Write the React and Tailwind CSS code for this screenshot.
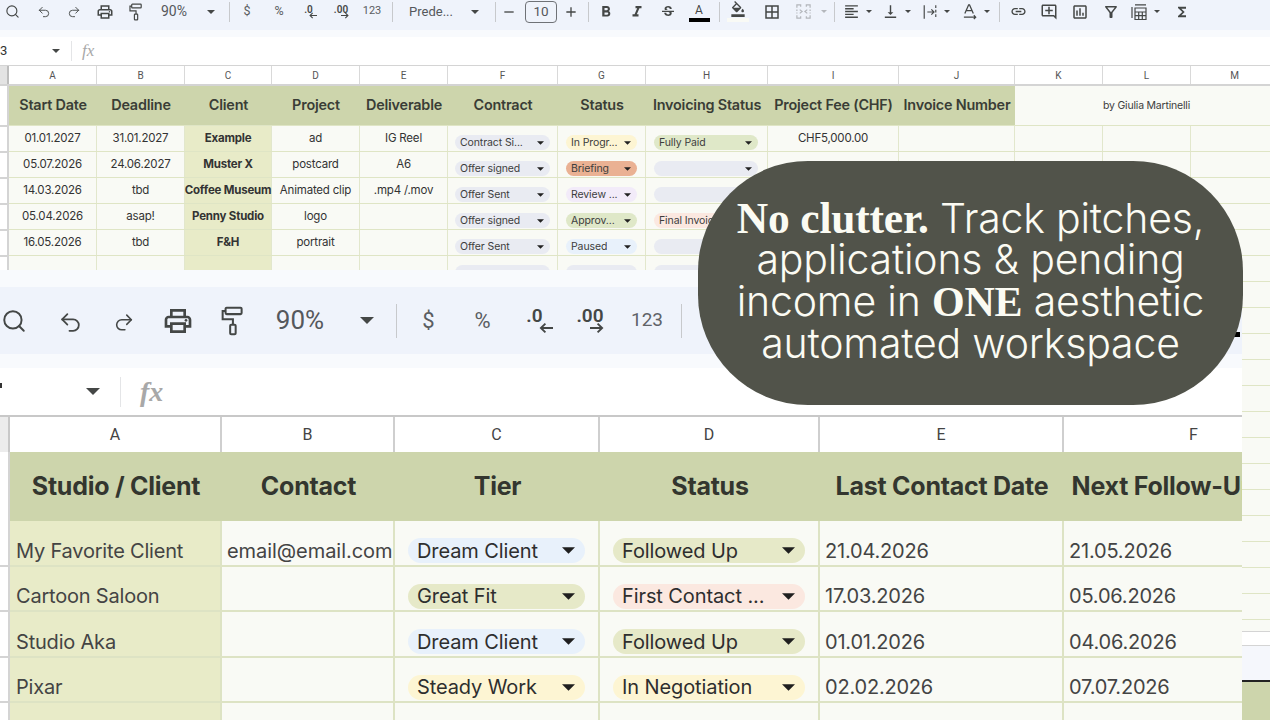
import React from "react";
import { Undo2, Redo2, Search } from "lucide-react";
import {
  MdOutlineLocalPrintshop, MdRemove, MdAdd, MdFormatBold, MdFormatItalic,
  MdStrikethroughS, MdFormatColorFill, MdBorderAll, MdFormatAlignLeft, MdVerticalAlignBottom, MdLink,
  MdOutlineAddComment, MdOutlineInsertChart, MdOutlineFilterAlt, MdFunctions,
} from "react-icons/md";

const Caret = ({ cls = "w-[8px] h-[4px]", color = "fill-[#444746]" }) => (
  <svg viewBox="0 0 8 4" className={`shrink-0 ${cls}`}><path d="M0 0h8L4 4z" className={color} /></svg>
);
const Sep = ({ cls = "h-[20px]" }) => <div className={`w-px bg-[#c7c9cc] shrink-0 ${cls}`} />;
const Slot = ({ w, children }) => <div className={`${w} shrink-0 flex items-center justify-center text-[#444746]`}>{children}</div>;

const DecArrow = ({ dir, cls }) => (
  <svg viewBox="0 0 12 10" className={cls}>
    {dir === "left"
      ? <path d="M12 5H2M5.5 1.2 1.6 5l3.9 3.8" fill="none" stroke="#444746" strokeWidth="1.6" />
      : <path d="M0 5h10M6.5 1.2 10.4 5 6.5 8.8" fill="none" stroke="#444746" strokeWidth="1.6" />}
  </svg>
);
const Roller = ({ cls }) => (
  <svg viewBox="0 0 24 32" className={cls}>
    <rect x="5" y="1.5" width="17.5" height="7" rx="1.2" fill="none" stroke="#444746" strokeWidth="2.2" />
    <path d="M5 5H1.8v9H13v6" fill="none" stroke="#444746" strokeWidth="2.2" />
    <rect x="10" y="20" width="6" height="10.5" rx="1.2" fill="none" stroke="#444746" strokeWidth="2.2" />
  </svg>
);
const MergeIcon = () => (
  <svg viewBox="0 0 18 18" className="w-[17px] h-[17px]">
    <path d="M2 5V2h4v2M16 5V2h-4v2M2 13v3h4v-2M16 13v3h-4v-2M2 7v1.5M2 10v1M16 7v1.5M16 10v1M5 7l2.5 2L5 11M13 7l-2.5 2 2.5 2" fill="none" stroke="#b4b7bc" strokeWidth="1.3" />
  </svg>
);
const Overflow = () => (
  <svg viewBox="0 0 18 18" className="w-[16px] h-[16px]">
    <path d="M2.5 1.5v15M6 9h7.5M10.5 6l3 3-3 3" fill="none" stroke="#444746" strokeWidth="1.3" />
    <path d="M15.5 1.5v15" fill="none" stroke="#444746" strokeWidth="1.3" strokeDasharray="3 2" />
  </svg>
);
const RotateA = () => (
  <svg viewBox="0 0 18 18" className="w-[17px] h-[17px]"><path d="M3 11 7 2h1l4 9M4.5 8h6M2 15h12M12.5 13l2 2-2 2" fill="none" stroke="#444746" strokeWidth="1.3" /></svg>
);
const CalcTable = () => (
  <svg viewBox="0 0 18 18" className="w-[18px] h-[18px]"><path d="M2 15V4M5 1.8h11M5 5h11v11.5H5zM5 9h11M5 12.7h11M8.7 9v7.5M12.3 9v7.5" fill="none" stroke="#444746" strokeWidth="1.2" /></svg>
);

const roboto = "font-['Roboto','Liberation_Sans',sans-serif]";

function TopToolbar() {
  const ic = "w-[16px] h-[16px]";
  return (
    <div className={`h-[30px] bg-[#eff3fb] flex items-center pb-[7px] ${roboto} text-[13px] text-[#444746] overflow-hidden`}>
      <Slot w="w-[24px]"><Search className="w-[15px] h-[15px]" strokeWidth={1.8} /></Slot>
      <Slot w="w-[30px] ml-[5px]"><Undo2 className="w-[14px] h-[14px]" strokeWidth={1.6} /></Slot>
      <Slot w="w-[30px]"><Redo2 className="w-[14px] h-[14px]" strokeWidth={1.6} /></Slot>
      <Slot w="w-[30px] ml-[1px]"><MdOutlineLocalPrintshop className="w-[18px] h-[18px]" /></Slot>
      <Slot w="w-[30px]"><Roller cls="w-[13px] h-[18px]" /></Slot>
      <Slot w="w-[40px] ml-[4px]"><span className="text-[14px] text-[#55585c]">90%</span></Slot>
      <Slot w="w-[14px] ml-[10px]"><Caret /></Slot>
      <Sep cls="h-[20px] ml-[11px]" />
      <Slot w="w-[20px] ml-[7px]"><span className="text-[12.5px] text-[#5a5d61]">$</span></Slot>
      <Slot w="w-[20px] ml-[12px]"><span className="text-[12.5px] text-[#5a5d61]">%</span></Slot>
      <Slot w="w-[24px] ml-[9px]"><span className="relative text-[10px] font-semibold -mt-[5px] -ml-[3px]">.0<DecArrow dir="left" cls="absolute w-[8px] h-[7px] left-[5px] top-[10px]" /></span></Slot>
      <Slot w="w-[24px] ml-[7px]"><span className="relative text-[10px] font-semibold -mt-[5px]">.00<DecArrow dir="right" cls="absolute w-[8px] h-[7px] left-[7px] top-[10px]" /></span></Slot>
      <Slot w="w-[24px] ml-[7px]"><span className="text-[11px] text-[#5a5d61]">123</span></Slot>
      <Sep cls="h-[20px] ml-[8px]" />
      <Slot w="w-[48px] ml-[14px]"><span className="text-[13px] text-[#55585c]">Prede...</span></Slot>
      <Slot w="w-[14px] ml-[13px]"><Caret /></Slot>
      <Sep cls="h-[20px] ml-[13px]" />
      <Slot w="w-[20px] ml-[3px]"><MdRemove className={ic} /></Slot>
      <div className="w-[32px] h-[22px] ml-[6px] shrink-0 border border-[#6f7277] rounded-[4px] flex items-center justify-center text-[13.5px] text-[#55585c]">10</div>
      <Slot w="w-[20px] ml-[4px]"><MdAdd className={ic} /></Slot>
      <Sep cls="h-[20px] ml-[7px]" />
      <Slot w="w-[24px] ml-[5px]"><MdFormatBold className="w-[18px] h-[18px]" /></Slot>
      <Slot w="w-[24px] ml-[7px]"><MdFormatItalic className="w-[18px] h-[18px]" /></Slot>
      <Slot w="w-[24px] ml-[7px]"><MdStrikethroughS className={ic} /></Slot>
      <Slot w="w-[24px] ml-[7px]">
        <div className="flex flex-col items-center -mb-[3px]">
          <span className="text-[12px] leading-[13px]">A</span>
          <div className="w-[21px] h-[4px] bg-black mt-[1px]" />
        </div>
      </Slot>
      <Sep cls="h-[20px] ml-[8px]" />
      <Slot w="w-[24px] ml-[6px]">
        <div className="flex flex-col items-center -mb-[4px]">
          <MdFormatColorFill className="w-[16px] h-[16px] -mt-[4px]" />
          <div className="w-[22px] h-[4px] bg-[#f9faf5] mt-[1px]" />
        </div>
      </Slot>
      <Slot w="w-[24px] ml-[10px]"><MdBorderAll className="w-[18px] h-[18px]" /></Slot>
      <Slot w="w-[24px] ml-[7px]"><MergeIcon /></Slot>
      <Slot w="w-[10px] ml-[4px]"><Caret cls="w-[6px] h-[3px]" color="fill-[#b4b7bc]" /></Slot>
      <Sep cls="h-[20px] ml-[5px]" />
      <Slot w="w-[20px] ml-[6px]"><MdFormatAlignLeft className="w-[17px] h-[17px]" /></Slot>
      <Slot w="w-[10px] ml-[3px]"><Caret cls="w-[6px] h-[3px]" /></Slot>
      <Slot w="w-[20px] ml-[6px]"><MdVerticalAlignBottom className="w-[17px] h-[17px]" /></Slot>
      <Slot w="w-[10px] ml-[3px]"><Caret cls="w-[6px] h-[3px]" /></Slot>
      <Slot w="w-[20px] ml-[7px]"><Overflow /></Slot>
      <Slot w="w-[10px] ml-[2px]"><Caret cls="w-[6px] h-[3px]" /></Slot>
      <Slot w="w-[20px] ml-[8px]"><RotateA /></Slot>
      <Slot w="w-[10px] ml-[2px]"><Caret cls="w-[6px] h-[3px]" /></Slot>
      <Sep cls="h-[20px] ml-[7px]" />
      <Slot w="w-[24px] ml-[6px]"><MdLink className="w-[17px] h-[17px]" /></Slot>
      <Slot w="w-[24px] ml-[7px]"><MdOutlineAddComment className="w-[18px] h-[18px]" /></Slot>
      <Slot w="w-[24px] ml-[7px]"><MdOutlineInsertChart className="w-[18px] h-[18px]" /></Slot>
      <Slot w="w-[24px] ml-[7px]"><MdOutlineFilterAlt className="w-[18px] h-[18px]" /></Slot>
      <Slot w="w-[24px] ml-[4px]"><CalcTable /></Slot>
      <Slot w="w-[10px] ml-[1px]"><Caret cls="w-[6px] h-[3px]" /></Slot>
      <Slot w="w-[20px] ml-[10px]"><MdFunctions className="w-[16px] h-[16px]" /></Slot>
    </div>
  );
}

const topLetters = [
  ["A", "w-[88px]"], ["B", "w-[88px]"], ["C", "w-[87px]"], ["D", "w-[88px]"], ["E", "w-[88px]"], ["F", "w-[110px]"],
  ["G", "w-[88px]"], ["H", "w-[122px]"], ["I", "w-[131px]"], ["J", "w-[116px]"], ["K", "w-[88px]"], ["L", "w-[88px]"], ["M", "w-[88px]"],
];
const dm = "font-['Inter','Liberation_Sans',sans-serif]";

const topHeaders = ["Start Date", "Deadline", "Client", "Project", "Deliverable", "Contract", "Status", "Invoicing Status", "Project Fee (CHF)", "Invoice Number"];

const topRows = [
  ["01.01.2027", "31.01.2027", "Example", "ad", "IG Reel", ["Contract Si...", "bg-[#e9ebf2]"], ["In Progr...", "bg-[#fdf5d3]"], ["Fully Paid", "bg-[#dfe8c8]"], "CHF5,000.00"],
  ["05.07.2026", "24.06.2027", "Muster X", "postcard", "A6", ["Offer signed", "bg-[#e9ebf2]"], ["Briefing", "bg-[#eab193]"], ["", "bg-[#e9ebf2]"], ""],
  ["14.03.2026", "tbd", "Coffee Museum", "Animated clip", ".mp4 /.mov", ["Offer Sent", "bg-[#e9ebf2]"], ["Review ...", "bg-[#f2ebf9]"], ["", "bg-[#e9ebf2]"], ""],
  ["05.04.2026", "asap!", "Penny Studio", "logo", "", ["Offer signed", "bg-[#e9ebf2]"], ["Approv...", "bg-[#dfe8c8]"], ["Final Invoice", "bg-[#fbe8e0]"], ""],
  ["16.05.2026", "tbd", "F&H", "portrait", "", ["Offer Sent", "bg-[#e9ebf2]"], ["Paused", "bg-[#e8f1fb]"], ["", "bg-[#e9ebf2]"], ""],
  ["", "", "", "", "", ["", "bg-[#e9ebf2]"], ["", "bg-[#e9ebf2]"], ["", "bg-[#e9ebf2]"], ""],
];

const TopCell = ({ w, cls = "", children }) => (
  <div className={`${w} shrink-0 h-full border-r border-[#e2e7cc] flex items-center justify-center text-[11.5px] text-[#333] leading-none tracking-[-0.2px] whitespace-nowrap ${cls}`}>{children}</div>
);
const TopPill = ({ w, pad, data }) => (
  <div className={`${w} shrink-0 h-full border-r border-[#e2e7cc] flex items-end ${pad} pb-[1px]`}>
    <div className={`w-full h-[15px] rounded-full ${data[1]} flex items-center justify-between pl-[5px] pr-[6px] text-[10.5px] text-[#3d3d3d] tracking-[-0.1px]`}>
      <span className="whitespace-nowrap overflow-hidden">{data[0]}</span>
      <Caret cls="w-[7px] h-[4px]" color="fill-[#222]" />
    </div>
  </div>
);

function TopSheet() {
  return (
    <div className="h-[631px] overflow-hidden bg-[#f9faf5]">
      <TopToolbar />
      <div className="h-[7px] bg-[#f8fafd]" />
      <div className={`h-[28px] bg-white flex items-center ${roboto}`}>
        <span className="text-[13px] text-[#333] w-[52px] shrink-0">3</span>
        <Caret cls="w-[8px] h-[4px]" />
        <div className="w-px h-[20px] bg-[#e4e5e7] ml-[11px]" />
        <span className="ml-[10px] font-['Liberation_Serif',serif] italic text-[17px] text-[#a8a8a8]">fx</span>
      </div>
      <div className={`h-[21px] flex bg-white border-t border-[#d4d4d4] border-b-2 border-b-[#d4d4d4] ${roboto} text-[10px] text-[#555]`}>
        <div className="w-[9px] shrink-0 bg-[#e3e3e3] border-r-2 border-[#bdbdbd]" />
        {topLetters.map(([l, w]) => (
          <div key={l} className={`${w} shrink-0 flex items-center justify-center border-r border-[#d9d9d9]`}>{l}</div>
        ))}
      </div>
      <div className={dm}>
        <div className="h-[39px] flex">
          <div className="w-[9px] shrink-0 bg-white border-r-2 border-[#d4d4d4]" />
          {topHeaders.map((h, i) => (
            <div key={h} className={`${topLetters[i][1]} shrink-0 bg-[#cdd5ac] flex items-center justify-center pb-[1px] text-[14.4px] font-semibold text-[#3a3d36] tracking-[-0.2px] whitespace-nowrap`}>{h}</div>
          ))}
          <div className="flex-1 flex items-center justify-center pl-[8px] text-[10.5px] text-[#3d3d3d] tracking-[-0.2px]">by Giulia Martinelli</div>
        </div>
        {Array.from({ length: 20 }).map((_, r) => {
          const d = topRows[r] || ["", "", "", "", "", null, null, null, ""];
          return (
            <div key={r} className="h-[26px] flex border-t border-[#dfe5c5] first:border-t-0">
              <div className="w-[9px] h-[27px] -mt-[1px] shrink-0 bg-white border-r-2 border-t-2 border-[#d4d4d4]" />
              <TopCell w="w-[88px]">{d[0]}</TopCell>
              <TopCell w="w-[88px]">{d[1]}</TopCell>
              <TopCell w="w-[87px]" cls={`font-bold text-[#222] ${r < 6 ? "bg-[#e8ebc8]" : ""}`}>{d[2]}</TopCell>
              <TopCell w="w-[88px]">{d[3]}</TopCell>
              <TopCell w="w-[88px]">{d[4]}</TopCell>
              {d[5] ? <TopPill w="w-[110px]" pad="px-[7px]" data={d[5]} /> : <TopCell w="w-[110px]" />}
              {d[6] ? <TopPill w="w-[88px]" pad="px-[8px]" data={d[6]} /> : <TopCell w="w-[88px]" />}
              {d[7] ? <TopPill w="w-[122px]" pad="pl-[8px] pr-[9px]" data={d[7]} /> : <TopCell w="w-[122px]" />}
              <TopCell w="w-[131px]">{d[8]}</TopCell>
              <TopCell w="w-[116px]" />
              <TopCell w="w-[88px]" />
              <TopCell w="w-[88px]" />
              <TopCell w="w-[88px]" />
            </div>
          );
        })}
      </div>
    </div>
  );
}

const bigHeaders = [
  ["Studio / Client", "w-[212px]"], ["Contact", "w-[173px]"], ["Tier", "w-[205px]"], ["Status", "w-[220px]"],
  ["Last Contact Date", "w-[244px]"], ["Next Follow-Up Date", "w-[261px]"],
];
const bigRows = [
  ["My Favorite Client", "email@email.com", ["Dream Client", "bg-[#e8f1fb]"], ["Followed Up", "bg-[#e6e9c8]"], "21.04.2026", "21.05.2026"],
  ["Cartoon Saloon", "", ["Great Fit", "bg-[#e6e9c8]"], ["First Contact ...", "bg-[#fbe8e0]"], "17.03.2026", "05.06.2026"],
  ["Studio Aka", "", ["Dream Client", "bg-[#e8f1fb]"], ["Followed Up", "bg-[#e6e9c8]"], "01.01.2026", "04.06.2026"],
  ["Pixar", "", ["Steady Work", "bg-[#fdf5d3]"], ["In Negotiation", "bg-[#fdf5d3]"], "02.02.2026", "07.07.2026"],
  ["", "", null, null, "", ""],
];

const BigPill = ({ data }) =>
  data ? (
    <div className={`w-full h-[25px] rounded-full ${data[1]} flex items-center justify-between pl-[9px] pr-[10px] text-[20px] text-[#2e2e2e] tracking-[-0.1px]`}>
      <span className="whitespace-nowrap">{data[0]}</span>
      <Caret cls="w-[13px] h-[7px]" color="fill-[#1f1f1f]" />
    </div>
  ) : null;

function SecondWindow() {
  const textCell = "shrink-0 border-r-2 border-[#dde3c4] flex items-end leading-[28px]";
  const pillCell = "shrink-0 border-r-2 border-[#dde3c4] flex items-end pl-[13px] pr-[13px] pb-[1.5px]";
  return (
    <div className="absolute left-0 top-[270px] w-[1242px] h-[450px] bg-white overflow-hidden">
      <div className="h-[17px] bg-[#f8fafd]" />
      <div className={`h-[67px] bg-[#eff3fb] flex items-center ${roboto} text-[#444746]`}>
        <Slot w="w-[28px]"><Search className="w-[26px] h-[26px]" strokeWidth={1.8} /></Slot>
        <Slot w="w-[85px]"><Undo2 className="w-[25px] h-[25px] mt-[3px]" strokeWidth={1.7} /></Slot>
        <Slot w="w-[22px]"><Redo2 className="w-[25px] h-[25px] mt-[3px]" strokeWidth={1.7} /></Slot>
        <Slot w="w-[86px]"><MdOutlineLocalPrintshop className="w-[32px] h-[32px]" /></Slot>
        <Slot w="w-[22px]"><Roller cls="w-[25px] h-[34px] mt-[1px]" /></Slot>
        <Slot w="w-[86px] ml-[14px]"><span className="text-[26px] text-[#55585c]">90%</span></Slot>
        <Slot w="w-[26px] ml-[11px]"><Caret cls="w-[14px] h-[7px]" /></Slot>
        <Sep cls="h-[34px] ml-[16px]" />
        <Slot w="w-[65px]"><span className="text-[22px] text-[#5a5d61] -ml-[2px]">$</span></Slot>
        <Slot w="w-[43px]"><span className="text-[22px] text-[#5a5d61] -ml-[2px]">%</span></Slot>
        <Slot w="w-[65px]"><span className="relative text-[19px] font-semibold -mt-[8px] -ml-[6px]">.0<DecArrow dir="left" cls="absolute w-[14px] h-[12px] left-[13px] top-[20px]" /></span></Slot>
        <Slot w="w-[43px]"><span className="relative text-[19px] font-semibold -mt-[8px] -ml-[3px]">.00<DecArrow dir="right" cls="absolute w-[14px] h-[12px] left-[14px] top-[20px]" /></span></Slot>
        <Slot w="w-[68px]"><span className="text-[19px] text-[#5f6368]">123</span></Slot>
        <Sep cls="h-[34px]" />
      </div>
      <div className="h-[14px] bg-[#f8fafd]" />
      <div className={`h-[47px] flex items-center relative ${roboto}`}>
        <Caret cls="w-[14px] h-[7px] ml-[86px]" />
        <div className="w-px h-[30px] bg-[#e4e5e7] ml-[20px]" />
        <span className="ml-[19px] font-['Liberation_Serif',serif] italic font-bold text-[28px] text-[#a8a8a8] leading-none">fx</span>
        <span className="absolute left-0 top-[15px] w-[2px] h-[5px] bg-[#333]" />
      </div>
      <div className={`h-[37px] flex bg-white border-t-2 border-[#c8c8c8] ${roboto} text-[16px] text-[#444]`}>
        <div className="w-[10px] shrink-0 bg-[#ececec] border-r-2 border-[#c8c8c8]" />
        {["A", "B", "C", "D", "E", "F"].map((l, i) => (
          <div key={l} className={`${bigHeaders[i][1]} shrink-0 flex items-center justify-center border-r-2 border-[#cfcfcf]`}>{l}</div>
        ))}
      </div>
      <div className={dm}>
        <div className="h-[69px] flex">
          <div className="w-[10px] shrink-0 bg-white border-r-2 border-[#d4d4d4]" />
          {bigHeaders.map(([h, w]) => (
            <div key={h} className={`${w} shrink-0 bg-[#cdd5ac] flex items-center justify-center text-[25px] font-bold text-[#33362f] tracking-[-0.25px] whitespace-nowrap`}>
              {h}
            </div>
          ))}
        </div>
        {bigRows.map((r, i) => (
          <div key={i} className="h-[45.5px] flex border-b-2 border-[#dde3c4] bg-[#f9faf5] text-[20px] text-[#444] tracking-[-0.2px]">
            <div className="w-[10px] h-[45.5px] shrink-0 bg-white border-r-2 border-b-2 border-[#d4d4d4]" />
            <div className={`w-[212px] bg-[#e8ebc8] pl-[6px] ${textCell}`}>{r[0]}</div>
            <div className={`w-[173px] pl-[5px] tracking-[-0.05px] ${textCell}`}>{r[1]}</div>
            <div className={`w-[205px] ${pillCell}`}><BigPill data={r[2]} /></div>
            <div className={`w-[220px] ${pillCell}`}><BigPill data={r[3]} /></div>
            <div className={`w-[244px] pl-[5px] ${textCell}`}>{r[4]}</div>
            <div className={`w-[261px] pl-[5px] ${textCell}`}>{r[5]}</div>
          </div>
        ))}
      </div>
    </div>
  );
}

export default function App() {
  return (
    <div className="relative w-[1270px] h-[720px] overflow-hidden bg-white">
      <TopSheet />
      <div className="border-t border-[#d4d4d4] h-[14px] bg-white" />
      <div className="border-t border-[#d4d4d4] h-[35px] bg-[#f5f7fc]" />
      <div className="border-t-2 border-[#222] h-[40px] bg-[#cdd5ac]" />
      <SecondWindow />
      <div className="absolute left-[1233px] top-[332px] w-[7px] h-[5px] bg-black" />
      <div className="absolute left-[698px] top-[161px] w-[545px] h-[244px] rounded-[110px] bg-[#51534a] flex flex-col items-center justify-center pb-[4px] font-['Inter','Liberation_Sans',sans-serif] text-[41px] font-light leading-[41.5px] text-[#fbfbf3] tracking-[-0.2px]">
        <div className="whitespace-nowrap"><span className="font-['Liberation_Serif',serif] font-bold text-[43.5px] tracking-[-0.2px]">No clutter.</span> Track pitches,</div>
        <div className="whitespace-nowrap">applications &amp; pending</div>
        <div className="whitespace-nowrap">income in <span className="font-['Liberation_Serif',serif] font-bold text-[42px]">ONE</span> aesthetic</div>
        <div className="whitespace-nowrap">automated workspace</div>
      </div>
    </div>
  );
}
